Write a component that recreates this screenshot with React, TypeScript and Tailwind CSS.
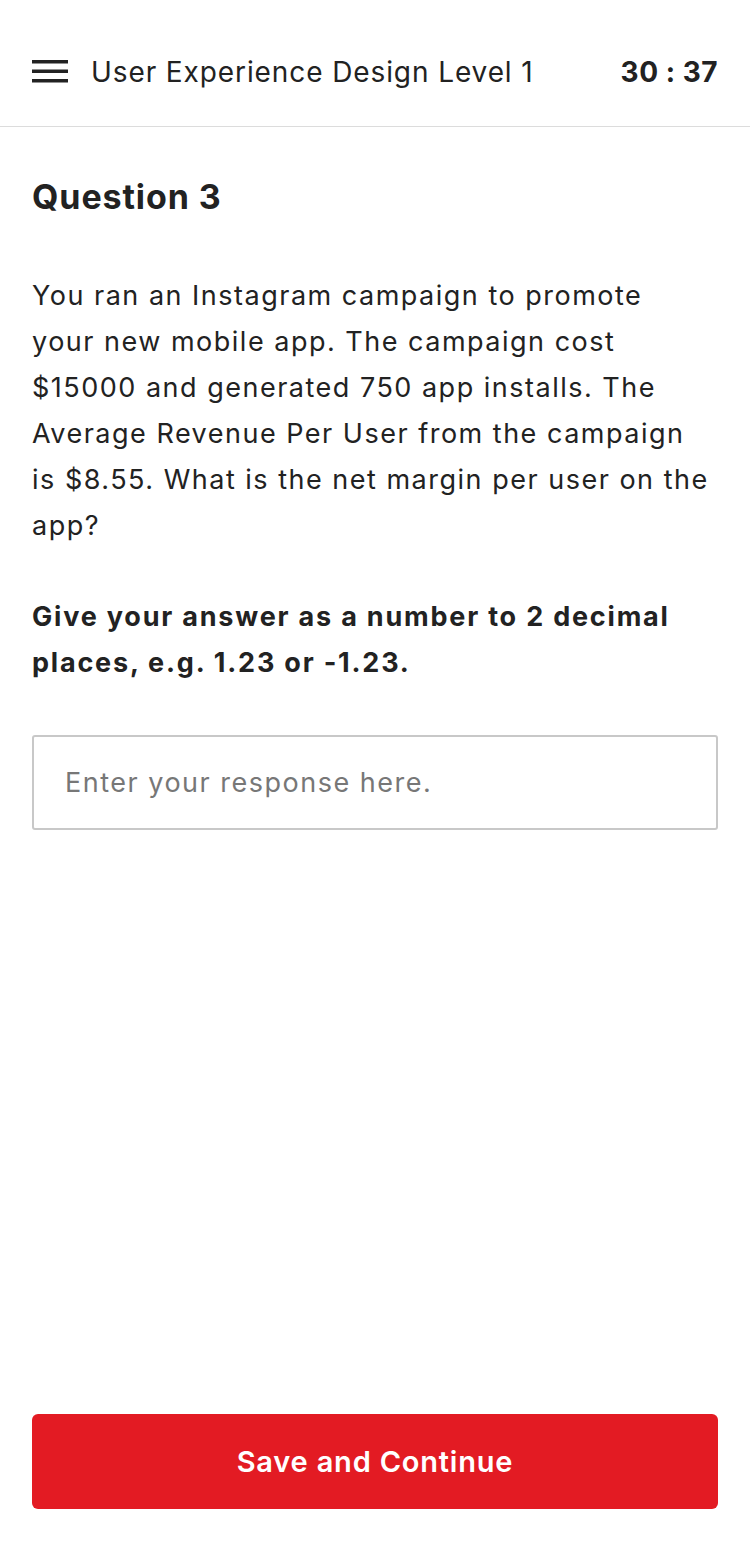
import React from 'react';

const font = { fontFamily: 'Inter, "Open Sans", sans-serif' };

const MenuIcon = () => (
    <svg width="36" height="23" viewBox="0 0 36 23" className="shrink-0">
        <rect x="0" y="0" width="36" height="3.5" fill="#222" />
        <rect x="0" y="9.5" width="36" height="3.5" fill="#222" />
        <rect x="0" y="19" width="36" height="3.5" fill="#222" />
    </svg>
);

export default function App() {
    return (
        <div className="flex flex-col h-[1548px] bg-white text-[#222]" style={font}>
            <header className="flex items-center h-[127px] border-b border-[#dcdcdc] px-8 pt-[17px]">
                <MenuIcon />
                <p className="ml-[23px] text-[28px] leading-none tracking-[0.9px]">User Experience Design Level 1</p>
                <p className="ml-auto text-[28px] font-bold leading-none tracking-[0.5px]">30 : 37</p>
            </header>

            <main className="flex flex-col px-8 pt-[47px]">
                <h1 className="text-[34px] font-bold leading-[46px] tracking-[0.9px]">Question 3</h1>
                {/* line breaks follow the original layout */}
                <p className="mt-[53px] text-[27px] leading-[46px] tracking-[1.5px]">
                    You ran an Instagram campaign to promote
                    <br />
                    your new mobile app. The campaign cost
                    <br />
                    $15000 and generated 750 app installs. The
                    <br />
                    Average Revenue Per User from the campaign
                    <br />
                    is $8.55. What is the net margin per user on the
                    <br />
                    app?
                </p>
                <p className="mt-[45px] text-[27px] font-bold leading-[46px] tracking-[1.8px]">
                    Give your answer as a number to 2 decimal
                    <br />
                    places, e.g. 1.23 or -1.23.
                </p>
                <input
                    type="text"
                    placeholder="Enter your response here."
                    className="mt-[49px] h-[95px] w-full rounded-[3px] border-2 border-[#c8c8c8] px-[31px] text-[27px] tracking-[1.5px] outline-none placeholder:text-[#777]"
                />
            </main>

            <div className="mt-auto px-8 pb-[39px]">
                <button className="w-full h-[95px] rounded-[6px] bg-[#e31b23] text-white text-[29px] font-semibold tracking-[0.8px]">
                    Save and Continue
                </button>
            </div>
        </div>
    );
}
